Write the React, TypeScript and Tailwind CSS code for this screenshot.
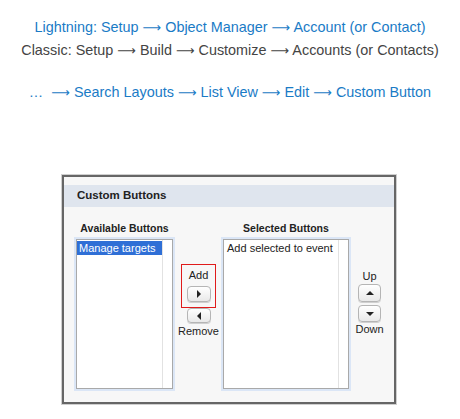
import type { ReactNode } from 'react'

function Arrow({ dir }: { dir: 'left' | 'right' | 'up' | 'down' }) {
  const pts = {
    right: '3,1 7,5 3,9',
    left: '7,1 3,5 7,9',
    up: '1,7 5,3 9,7',
    down: '1,3 5,7 9,3',
  }[dir]
  return (
    <svg width="10" height="10" viewBox="0 0 10 10">
      <polygon points={pts} fill="#222" />
    </svg>
  )
}

function SmallButton({ children, className = '' }: { children: ReactNode; className?: string }) {
  return (
    <div
      className={`flex items-center justify-center rounded-[4px] border border-[#b5b5b5] bg-gradient-to-b from-white to-[#e9e9e9] shadow-[0_1px_0_#d0d0d0] ${className}`}
    >
      {children}
    </div>
  )
}

function ListBox({ width, children }: { width: number; children?: ReactNode }) {
  return (
    <div
      className="flex h-[150px] border border-[#a9a9a9] bg-white shadow-[0_0_0_2px_#dbe6f6]"
      style={{ width }}
    >
      <div className="min-w-0 flex-1 pt-[1px]">{children}</div>
      <div className="w-[10px] border-l border-[#e2e2e2] bg-white" />
    </div>
  )
}

// long thin arrow like the one in the reference
const A = () => <span className="font-['DejaVu_Sans',sans-serif] text-[13px]">⟶</span>

export default function App() {
  return (
    <div className="w-[460px] h-[419px] bg-white font-['Liberation_Sans',Arial,sans-serif]">
      <div className="pt-[16px] text-center text-[14.4px] leading-[22px]">
        <div className="text-[#1a7bc6]">
          Lightning: Setup <A /> Object Manager <A /> Account (or Contact)
        </div>
        <div className="text-[#444]">
          Classic: Setup <A /> Build <A /> Customize <A /> Accounts (or Contacts)
        </div>
        <div className="mt-[19px] text-[#1a7bc6]">
          …&nbsp; <A /> Search Layouts <A /> List View <A /> Edit <A /> Custom Button
        </div>
      </div>

      <div className="ml-[62px] mt-[71px] h-[229px] w-[334px] border-2 border-[#666] bg-[#f7f7f7] pt-[8px] shadow-[0_0_0_1px_#cfcfcf]">
        <div className="flex h-[22px] items-center bg-[#dfe5ee] pl-[13px] text-[11.5px] font-bold text-[#222]">
          Custom Buttons
        </div>

        <div className="flex items-start pl-[12px] pt-[14px]">
          <div className="flex flex-col items-center">
            <div className="mb-[4px] whitespace-nowrap text-[10.5px] font-bold leading-[14px] text-[#222]">Available Buttons</div>
            <ListBox width={97}>
              <div className="whitespace-nowrap bg-[#2f6fd6] px-[2px] text-[11px] leading-[14px] text-white">Manage targets</div>
            </ListBox>
          </div>

          <div className="ml-[8px] mt-[43px] flex w-[35px] flex-col items-center">
            <div className="flex h-[44px] w-[35px] flex-col items-center border border-[#e01b1b] pt-[4px]">
              <div className="text-[11px] leading-[13px] text-[#222]">Add</div>
              <SmallButton className="mt-[4px] h-[16px] w-[24px]">
                <Arrow dir="right" />
              </SmallButton>
            </div>
            <SmallButton className="mt-[0px] h-[15px] w-[24px]">
              <Arrow dir="left" />
            </SmallButton>
            <div className="mt-[2px] text-[11px] leading-[13px] text-[#222]">Remove</div>
          </div>

          <div className="ml-[7px] flex flex-col items-center">
            <div className="mb-[4px] whitespace-nowrap text-[10.5px] font-bold leading-[14px] text-[#222]">Selected Buttons</div>
            <ListBox width={126}>
              <div className="whitespace-nowrap px-[3px] text-[11px] leading-[14px] text-[#222]">Add selected to event</div>
            </ListBox>
          </div>

          <div className="ml-[9px] mt-[49px] flex w-[23px] flex-col items-center">
            <div className="text-[11px] leading-[13px] text-[#222]">Up</div>
            <SmallButton className="mt-[1px] h-[18px] w-[23px]">
              <Arrow dir="up" />
            </SmallButton>
            <SmallButton className="mt-[3px] h-[17px] w-[23px]">
              <Arrow dir="down" />
            </SmallButton>
            <div className="mt-[1px] text-[11px] leading-[13px] text-[#222]">Down</div>
          </div>
        </div>
      </div>
    </div>
  )
}
